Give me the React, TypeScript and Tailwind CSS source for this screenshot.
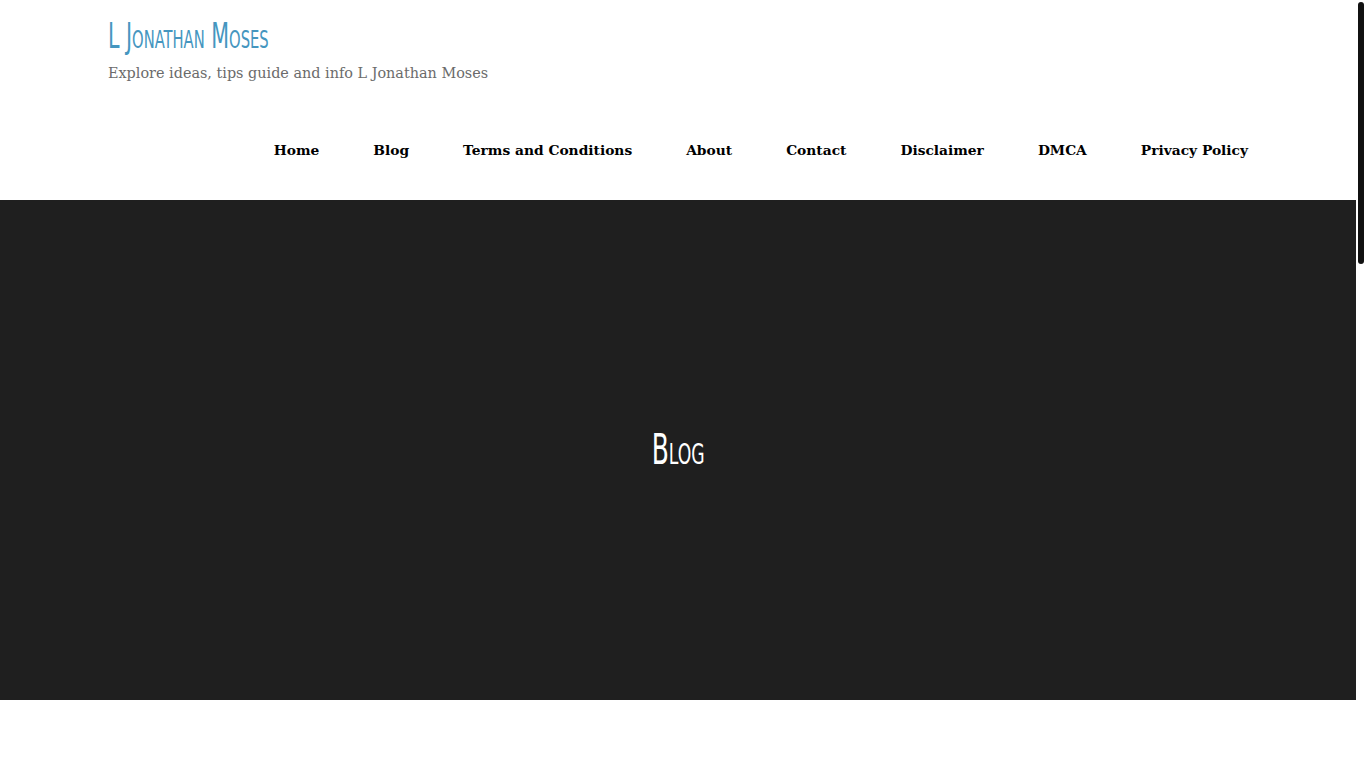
const navItems = [
  'Home',
  'Blog',
  'Terms and Conditions',
  'About',
  'Contact',
  'Disclaimer',
  'DMCA',
  'Privacy Policy',
]

const titleFont = { fontFamily: '"Liberation Sans Narrow", "DejaVu Sans Condensed", sans-serif' }

export default function App() {
  return (
    <div className="flex h-screen overflow-hidden bg-white font-['DejaVu_Serif',serif]">
      <div className="w-[1356px] shrink-0">
        {/* Header */}
        <header className="h-[200px] bg-white">
          <div className="mx-auto w-[1140px] pt-[16px]">
            <a
              href="#"
              style={titleFont}
              className="block w-fit origin-left scale-x-[0.655] text-[35px] leading-[40px] font-normal text-[#4596bf] [font-variant:small-caps]"
            >
              L Jonathan Moses
            </a>
            <p className="mt-[7px] text-[14.4px] leading-[20px] text-[#6b6b6b]">
              Explore ideas, tips guide and info L Jonathan Moses
            </p>
            <nav className="mt-[56px] flex justify-end gap-[54px]">
              {navItems.map((item) => (
                <a key={item} href="#" className="text-[13.8px] leading-[22px] font-bold text-black">
                  {item}
                </a>
              ))}
            </nav>
          </div>
        </header>

        {/* Page title */}
        <section className="flex h-[500px] items-center justify-center bg-[#1f1f1f]">
          <h1
            style={titleFont}
            className="scale-x-[0.66] text-[42px] leading-[48px] text-white [font-variant:small-caps]"
          >
            Blog
          </h1>
        </section>

        <main className="h-[1550px] bg-white" />
      </div>

      {/* Scrollbar */}
      <div className="relative w-[10px] shrink-0 bg-white">
        <div className="absolute left-[1.5px] top-[2px] h-[262px] w-[6.5px] rounded-full bg-[#111111]" />
      </div>
    </div>
  )
}
